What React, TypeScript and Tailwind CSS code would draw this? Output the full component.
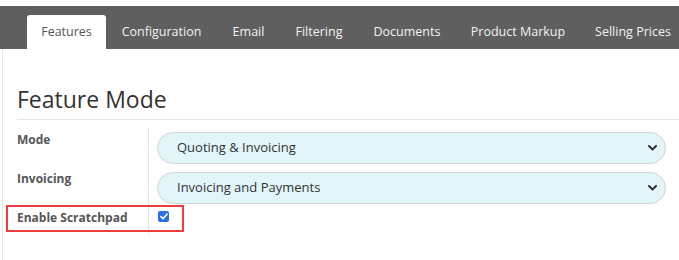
import React from 'react'

const tabs = [
  { label: 'Features', w: 'w-[79px]' },
  { label: 'Configuration', w: 'w-[111px]' },
  { label: 'Email', w: 'w-[63px]' },
  { label: 'Filtering', w: 'w-[78px]' },
  { label: 'Documents', w: 'w-[98px]' },
  { label: 'Product Markup', w: 'w-[124px]' },
  { label: 'Selling Prices', w: 'w-[106px]' },
]

function Chevron() {
  return (
    <svg width="9" height="6" viewBox="0 0 9 6" className="shrink-0">
      <path d="M1 1l3.5 3.5L8 1" fill="none" stroke="#333" strokeWidth="2" strokeLinecap="round" strokeLinejoin="round" />
    </svg>
  )
}

function SelectBox({ value }: { value: string }) {
  return (
    <div className="flex h-[32px] items-center justify-between rounded-full border border-[#d4d4d4] bg-[#e2f6fa] pl-[19px] pr-[8px] text-[13px] text-[#333]">
      <span>{value}</span>
      <Chevron />
    </div>
  )
}

export default function App() {
  return (
    <div className="h-[260px] w-[679px] overflow-hidden bg-white pt-[6px] font-['Open_Sans',sans-serif]">
      {/* Tab bar */}
      <div className="flex h-[43px] items-end overflow-hidden bg-[#5f5f5f] pl-[27px]">
        {tabs.map((tab, i) => (
          <div
            key={tab.label}
            className={
              i === 0
                ? `flex h-[34px] shrink-0 items-center justify-center rounded-t-[3px] bg-white text-[12.5px] text-[#555] ${tab.w}`
                : `flex h-[34px] shrink-0 items-center justify-center whitespace-nowrap text-[12.5px] text-[#f2f2f2] ${tab.w}`
            }
          >
            {tab.label}
          </div>
        ))}
      </div>

      {/* Content */}
      <div className="ml-[2px] h-[211px] border-l border-[#e6e6e6] pl-[14px] pt-[36px]">
        <h1 className="text-[23px] leading-[28px] text-[#333]">Feature Mode</h1>
        <div className="mt-[6px] border-t border-[#e4e4e4]" />

        <div className="mt-[8px] grid grid-cols-[132px_1fr] pr-[13px]">
          <div className="border-r border-[#e4e4e4] pt-[3px] text-[12px] font-bold leading-[18px] text-[#555]">Mode</div>
          <div className="py-[4px] pl-[8px]">
            <SelectBox value="Quoting & Invoicing" />
          </div>

          <div className="border-r border-[#e4e4e4] pt-[2px] text-[12px] font-bold leading-[18px] text-[#555]">Invoicing</div>
          <div className="py-[4px] pl-[8px]">
            <SelectBox value="Invoicing and Payments" />
          </div>

          <div className="relative border-r border-[#e4e4e4] pb-[8px] pt-[1px] text-[12px] font-bold leading-[18px] text-[#555]">
            Enable Scratchpad
            {/* Highlight annotation */}
            <div className="pointer-events-none absolute left-[-11px] top-[-3px] h-[27px] w-[178px] border-2 border-[#ef3b3b]" />
          </div>
          <div className="pl-[9px] pt-[3px]">
            <span className="flex h-[11px] w-[11px] items-center justify-center rounded-[2px] bg-[#2b6de5]">
              <svg width="8" height="7" viewBox="0 0 8 7">
                <path d="M1 3.6l2 2L7 1.2" fill="none" stroke="#fff" strokeWidth="1.6" strokeLinecap="round" strokeLinejoin="round" />
              </svg>
            </span>
          </div>
        </div>
      </div>
    </div>
  )
}
